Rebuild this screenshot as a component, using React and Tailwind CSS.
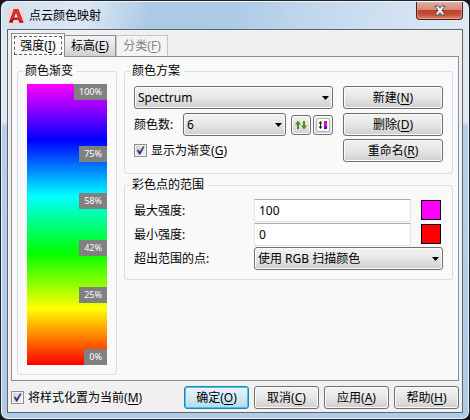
import { useState } from 'react';

const STOPS = [
  { label: '100%', gap: 'grow-0' },
  { label: '75%', gap: 'grow-[46]' },
  { label: '58%', gap: 'grow-[31]' },
  { label: '42%', gap: 'grow-[31]' },
  { label: '25%', gap: 'grow-[31]' },
  { label: '0%', gap: 'grow-[46]' },
];

function Hotkey({ text, char }) {
  return (
    <span>
      {text}(<u className="underline underline-offset-2">{char}</u>)
    </span>
  );
}

function Button({ text, char, primary, className = '' }) {
  const look = primary
    ? 'border-[#2f7fa8] bg-linear-to-b from-[#eaf4fa] via-[#d5e9f4] to-[#b5d8ea] shadow-[inset_0_0_0_1px_#35c8f2]'
    : 'border-[#707070] bg-linear-to-b from-[#f3f3f3] from-0% via-[#e6e6e6] via-50% to-[#cfcfcf] shadow-[inset_0_0_0_1px_#fafafa]';
  return (
    <button type="button" className={`h-[23px] rounded-[3px] border leading-4 ${look} ${className}`}>
      <Hotkey text={text} char={char} />
    </button>
  );
}

function Select({ id, label, options, className = '' }) {
  return (
    <div className={`relative ${className}`}>
      <select
        id={id}
        aria-label={label}
        className="block h-[23px] w-full appearance-none rounded-[3px] border border-[#707070] bg-linear-to-b from-[#f3f3f3] from-0% via-[#e6e6e6] via-50% to-[#cfcfcf] pr-5 pl-[3px] leading-4 shadow-[inset_0_0_0_1px_#fafafa]"
      >
        {options.map((o) => (
          <option key={o}>{o}</option>
        ))}
      </select>
      <svg className="pointer-events-none absolute top-[10px] right-1 h-1 w-[7px]" viewBox="0 0 7 4">
        <path d="M0 0h7L3.5 4z" fill="#000" />
      </svg>
    </div>
  );
}

function Checkbox({ text, char }) {
  const [checked, setChecked] = useState(true);
  return (
    <label className="flex items-center gap-1">
      <span className="relative block size-[13px]">
        <input
          type="checkbox"
          checked={checked}
          onChange={(e) => setChecked(e.target.checked)}
          className="block size-[13px] appearance-none border border-[#8e8f8f] bg-linear-to-br from-[#c9ced6] to-[#f6f6f6] shadow-[inset_0_0_0_1px_#f4f4f4]"
        />
        {checked && (
          <svg className="pointer-events-none absolute inset-0" viewBox="0 0 13 13">
            <path d="M3 6.5l1.3-.8 1.5 2L9.2 2.4l1 .3L6.2 10.4H5.4z" fill="#31347c" stroke="#31347c" strokeWidth=".4" />
          </svg>
        )}
      </span>
      <Hotkey text={text} char={char} />
    </label>
  );
}

function Group({ title, className = '', children }) {
  return (
    <fieldset className={`min-w-0 rounded-[3px] border border-[#d5dfe5] px-[9px] ${className}`}>
      <legend className="-ml-1 pr-1 pl-[2px] leading-4">{title}</legend>
      {children}
    </fieldset>
  );
}

function IconButton({ label, children }) {
  return (
    <button
      type="button"
      aria-label={label}
      className="flex size-5 items-center justify-center rounded-[3px] border border-[#707070] bg-linear-to-b from-[#f3f3f3] to-[#d2d2d2] shadow-[inset_0_0_0_1px_#fafafa]"
    >
      {children}
    </button>
  );
}

function TitleBar() {
  return (
    <header className="-mx-[5px] flex h-7 items-start justify-between rounded-t-[7px] border-t border-[#eef5fb] bg-[linear-gradient(100deg,#d3e1ef_0%,#dbe7f3_18%,#accae5_32%,#aecbe6_50%,#c3d8ee_68%,#d0e0f2_82%,#dde8f5_100%)] pr-[5px] pl-1.5">
      <div className="flex h-[27px] items-center gap-[5px]">
        <svg className="size-4" viewBox="0 0 16 16">
          <rect width="16" height="16" fill="#f2d3cf" />
          <path d="M1 14.5L5.8 1h4.4L15.5 14.5h-4l-.9-2.5H5.4l-.8 2.5z" fill="#b5202a" />
          <path d="M5.8 1h4.4l5.3 13.5-1.4-.6-3.3-1.4L7.9 4 5.4 10l-2 1.2z" fill="#d3343a" />
          <path d="M1 14.5L5.4 11l-.8 3.5zM10.6 12l4.9 2.5h-4z" fill="#7f1219" />
          <path d="M8 5L6.2 9.4h3.5z" fill="#f6e4e2" />
        </svg>
        <h1>点云颜色映射</h1>
      </div>
      <button
        type="button"
        aria-label="关闭"
        className="flex h-[18px] w-[47px] items-center justify-center rounded-b-[4px] border border-t-0 border-[#4b1e22] bg-[linear-gradient(#e2aa9e_0%,#d68a7b_45%,#bf3f2a_50%,#c84f38_75%,#dc8a72_100%)] shadow-[inset_0_0_0_1px_#f0b8a880]"
      >
        <svg className="h-[11px] w-3" viewBox="0 0 12 11">
          <path
            d="M1 1h3.2L6 3.3 7.8 1H11L7.8 5.3 11 10H7.8L6 7.5 4.2 10H1l3.2-4.7z"
            fill="#fff"
            stroke="#535666"
            strokeWidth="1"
          />
        </svg>
      </button>
    </header>
  );
}

function Tabs() {
  return (
    <div role="tablist" className="flex h-[23px] items-end">
      <button
        type="button"
        role="tab"
        aria-selected="true"
        className="relative z-10 -mb-px h-6 w-[54px] shrink-0 border border-b-0 border-[#8c8e94] bg-[#f9f9f9] px-[2px] pt-[2px] pb-[2px]"
      >
        <span className="flex h-full items-center justify-center border border-dashed border-[#606060] leading-4">
          <Hotkey text="强度" char="I" />
        </span>
      </button>
      <button
        type="button"
        role="tab"
        aria-selected="false"
        className="h-[21px] w-[51px] shrink-0 border border-b-0 border-l-0 border-[#8c8e94] bg-linear-to-b from-[#f2f2f2] from-0% via-[#e9e9e9] via-45% to-[#cfcfcf] leading-4"
      >
        <Hotkey text="标高" char="E" />
      </button>
      <button
        type="button"
        role="tab"
        aria-selected="false"
        disabled
        className="h-[21px] w-[52px] shrink-0 border border-b-0 border-[#c9c7ba] bg-[#f3f3f3] leading-4 text-[#838383]"
      >
        <Hotkey text="分类" char="F" />
      </button>
    </div>
  );
}

function Gradient() {
  return (
    <div className="flex h-full flex-col items-end bg-[linear-gradient(#f0f,#00f,#0ff,#0f0,#ff0,#f00)] text-[9px] leading-4 text-white">
      {STOPS.map(({ label, gap }) => (
        <div key={label} className={`flex basis-4 flex-col justify-end ${gap}`}>
          <span className="bg-[#808080] px-[5px]">{label}</span>
        </div>
      ))}
    </div>
  );
}

function RangeRow({ id, label, children }) {
  return (
    <div className="flex h-6 items-start">
      <label htmlFor={id} className="w-[120px] shrink-0 leading-6">
        {label}
      </label>
      {children}
    </div>
  );
}

const inputClass =
  'h-[23px] w-0 min-w-0 grow border border-[#e2e3ea] border-t-[#abadb3] bg-white px-1 leading-4';

export default function App() {
  return (
    <div className="bg-[#15161c] font-['Noto_Sans','Noto_Sans_CJK_SC',sans-serif] text-xs text-black">
      <div className="flex min-h-screen flex-col rounded-lg border border-[#20242b] bg-[linear-gradient(#dce8f4_0%,#dfe9f4_29%,#b7d0ea_30%,#b0cbe5_100%)] px-1.5 pb-1.5 shadow-[inset_0_0_0_1px_#e6f1fa]">
        <TitleBar />
        <main className="flex grow flex-col border border-[#5b666d] bg-[#f0f0f0] p-[3px]">
          <Tabs />
          <section className="flex grow gap-[7px] border border-[#8c8e94] bg-[#f9f9f9] px-[5px] pt-1.5 pb-[5px]">
            <Group title="颜色渐变" className="flex w-[100px] shrink-0 flex-col pt-[5px] pb-[9px]">
              <Gradient />
            </Group>
            <div className="flex min-w-0 grow flex-col gap-[3px]">
              <Group title="颜色方案" className="pt-[7px] pb-[11px]">
                <div className="flex gap-[10px]">
                  <div className="flex min-w-0 grow flex-col gap-1">
                    <Select id="scheme" label="颜色方案" options={['Spectrum', 'Earth', 'Elevation']} />
                    <div className="flex items-center">
                      <label htmlFor="count" className="w-[49px] shrink-0">
                        颜色数:
                      </label>
                      <Select id="count" options={['6', '7', '8']} className="mr-[5px] grow" />
                      <div className="flex gap-[2px]">
                        <IconButton label="反转颜色">
                          <svg className="h-[10px] w-3" viewBox="0 0 12 10">
                            <path d="M3 9V3M9 1v6" stroke="#4b8e1e" strokeWidth="2" />
                            <path d="M0 4.5l3-4 3 4zM6 5.5h6l-3 4z" fill="#4b8e1e" />
                          </svg>
                        </IconButton>
                        <IconButton label="拉伸颜色">
                          <svg className="size-[14px] shrink-0" viewBox="0 0 14 14">
                            <defs>
                              <linearGradient id="bar" x1="0" y1="0" x2="0" y2="1">
                                <stop offset="0.15" stopColor="#f01818" />
                                <stop offset="0.5" stopColor="#f010f0" />
                                <stop offset="0.85" stopColor="#1818ff" />
                              </linearGradient>
                            </defs>
                            <rect x=".5" y=".5" width="13" height="13" rx="2" fill="#fafafa" stroke="#b4b4b4" />
                            <path d="M4.5 4v6" stroke="#222" />
                            <path d="M2.5 5.5l2-2.5 2 2.5zM2.5 8.5h4l-2 2.5z" fill="#222" />
                            <rect x="8" y="3" width="3" height="8" fill="url(#bar)" />
                          </svg>
                        </IconButton>
                      </div>
                    </div>
                    <div className="flex h-[21px] items-center">
                      <Checkbox text="显示为渐变" char="G" />
                    </div>
                  </div>
                  <div className="flex w-[100px] shrink-0 flex-col">
                    <Button text="新建" char="N" />
                    <Button text="删除" char="D" className="mt-1" />
                    <Button text="重命名" char="R" className="mt-[3px]" />
                  </div>
                </div>
              </Group>
              <Group title="彩色点的范围" className="pt-1.5 pb-2">
                <RangeRow id="max" label="最大强度:">
                  <input id="max" defaultValue="100" className={inputClass} />
                  <button type="button" aria-label="最大强度颜色" className="mt-px mr-[2px] ml-[10px] size-5 border border-black bg-[#f0f]" />
                </RangeRow>
                <RangeRow id="min" label="最小强度:">
                  <input id="min" defaultValue="0" className={inputClass} />
                  <button type="button" aria-label="最小强度颜色" className="mt-px mr-[2px] ml-[10px] size-5 border border-black bg-[#f00]" />
                </RangeRow>
                <RangeRow id="outside" label="超出范围的点:">
                  <Select id="outside" options={['使用 RGB 扫描颜色', '隐藏点']} className="min-w-0 grow" />
                </RangeRow>
              </Group>
            </div>
          </section>
          <footer className="mt-[5px] flex items-center justify-between">
            <Checkbox text="将样式化置为当前" char="M" />
            <div className="flex gap-[5px]">
              <Button text="确定" char="O" primary className="w-[65px]" />
              <Button text="取消" char="C" className="w-[65px]" />
              <Button text="应用" char="A" className="w-[65px]" />
              <Button text="帮助" char="H" className="w-[65px]" />
            </div>
          </footer>
        </main>
      </div>
    </div>
  );
}
